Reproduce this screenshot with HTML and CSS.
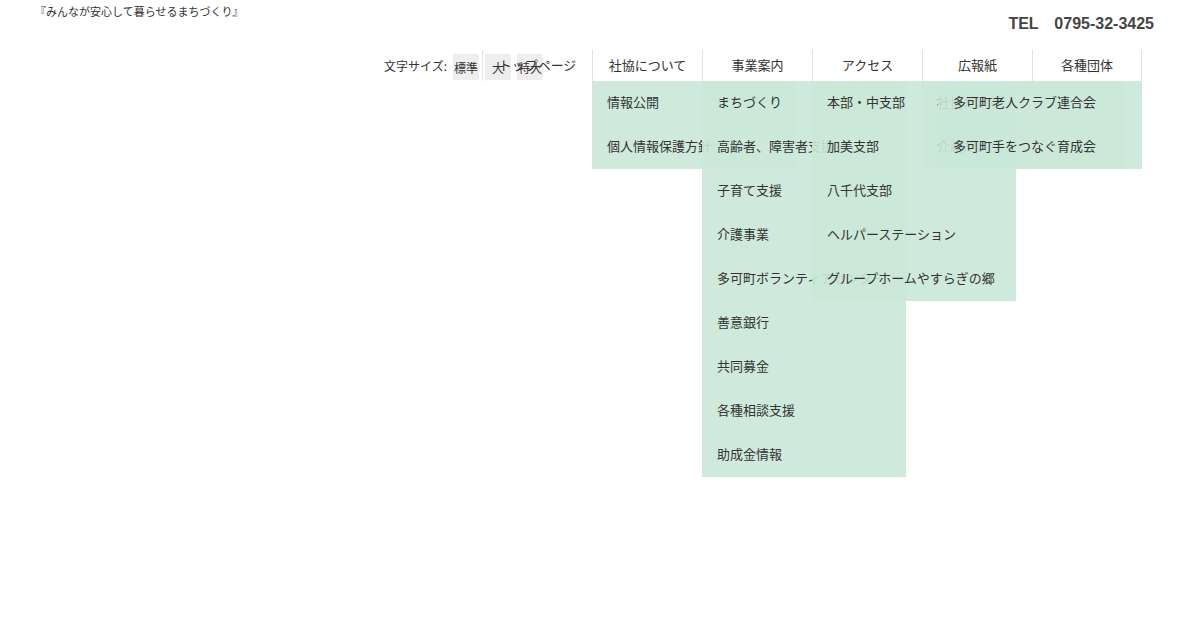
FILE: index.html
```html
<!DOCTYPE html>
<html lang="ja">
<head>
    <meta charset="UTF-8">
    <meta name="viewport" content="width=device-width, initial-scale=1.0">
    <title>多可町社会福祉協議会</title>
    <link rel="stylesheet" href="styles.css">
</head>
<body>
    <div class="page">
        <header class="site-header">
            <p class="tagline">『みんなが安心して暮らせるまちづくり』</p>
            <p class="tel">TEL　0795-32-3425</p>
        </header>

        <div class="nav-wrap">
            <div class="font-size">
                <span class="font-size-label">文字サイズ:</span>
                <button type="button">標準</button>
                <button type="button">大</button>
                <button type="button">特大</button>
            </div>

            <nav class="gnav">
                <ul class="gnav-list">
                    <li class="gnav-item"><span class="gnav-label">トップページ</span></li>
                    <li class="gnav-item"><span class="gnav-label">社協について</span>
                        <ul class="sub">
                            <li class="sub-item">情報公開</li>
                            <li class="sub-item">個人情報保護方針</li>
                        </ul>
                    </li>
                    <li class="gnav-item"><span class="gnav-label">事業案内</span>
                        <ul class="sub">
                            <li class="sub-item">まちづくり</li>
                            <li class="sub-item">高齢者、障害者支援</li>
                            <li class="sub-item">子育て支援</li>
                            <li class="sub-item">介護事業</li>
                            <li class="sub-item">多可町ボランティアセンター</li>
                            <li class="sub-item">善意銀行</li>
                            <li class="sub-item">共同募金</li>
                            <li class="sub-item">各種相談支援</li>
                            <li class="sub-item">助成金情報</li>
                        </ul>
                    </li>
                    <li class="gnav-item"><span class="gnav-label">アクセス</span>
                        <ul class="sub">
                            <li class="sub-item">本部・中支部</li>
                            <li class="sub-item">加美支部</li>
                            <li class="sub-item">八千代支部</li>
                            <li class="sub-item">ヘルパーステーション</li>
                            <li class="sub-item">グループホームやすらぎの郷</li>
                        </ul>
                    </li>
                    <li class="gnav-item"><span class="gnav-label">広報紙</span>
                        <ul class="sub">
                            <li class="sub-item">社協だより</li>
                            <li class="sub-item">介護だより</li>
                        </ul>
                    </li>
                    <li class="gnav-item"><span class="gnav-label">各種団体</span>
                        <ul class="sub">
                            <li class="sub-item">多可町老人クラブ連合会</li>
                            <li class="sub-item">多可町手をつなぐ育成会</li>
                        </ul>
                    </li>
                </ul>
            </nav>
        </div>
    </div>
</body>
</html>
```

FILE: styles.css
```css
html, body {
    margin: 0;
    background-color: #fff;
}
body {
    min-height: 632px;
    font-family: "Noto Sans CJK JP", "Noto Sans", sans-serif;
    color: #333;
}
.page {
    min-height: 632px;
}
.site-header {
    display: flex;
    justify-content: space-between;
    align-items: flex-start;
    height: 50px;
    padding: 0 46px 0 35px;
}
.tagline {
    margin: 3px 0 0;
    font-size: 11px;
    line-height: 16px;
    color: #333;
}
.tel {
    margin: 15px 0 0;
    font-family: "Liberation Sans", Arial, "Noto Sans CJK JP", sans-serif;
    font-size: 16px;
    font-weight: bold;
    line-height: 18px;
    color: #444;
}
.nav-wrap {
    position: relative;
    height: 31px;
}
.font-size {
    position: absolute;
    left: 384px;
    top: 4px;
    display: flex;
    align-items: center;
    gap: 6px;
    font-size: 12px;
}
.font-size-label {
    margin-top: -4px;
}
.font-size button {
    width: 26px;
    height: 26px;
    padding: 0;
    border: none;
    background-color: #eee;
    color: #333;
    font-family: inherit;
    font-size: 12px;
}
.gnav-list {
    display: flex;
    justify-content: flex-end;
    margin: 0;
    padding: 0 58px 0 0;
    list-style: none;
}
.gnav-item {
    position: relative;
    box-sizing: border-box;
    width: 110px;
    height: 31px;
    border-left: 1px solid #e2e2e2;
    font-size: 13px;
    text-align: center;
}
.gnav-item:last-child {
    border-right: 1px solid #e2e2e2;
}
.gnav-label {
    display: block;
    line-height: 29px;
}
.sub {
    position: absolute;
    z-index: 5;
    top: 31px;
    left: -1px;
    display: block;
    width: 204px;
    margin: 0;
    padding: 0;
    list-style: none;
    background-color: rgba(202, 232, 216, 0.9);
    text-align: left;
}
.gnav-item:last-child .sub {
    left: auto;
    right: -1px;
}
.sub-item {
    display: block;
    height: 44px;
    padding-left: 15px;
    font-size: 13px;
    line-height: 42px;
    color: #333;
    white-space: nowrap;
}
```
